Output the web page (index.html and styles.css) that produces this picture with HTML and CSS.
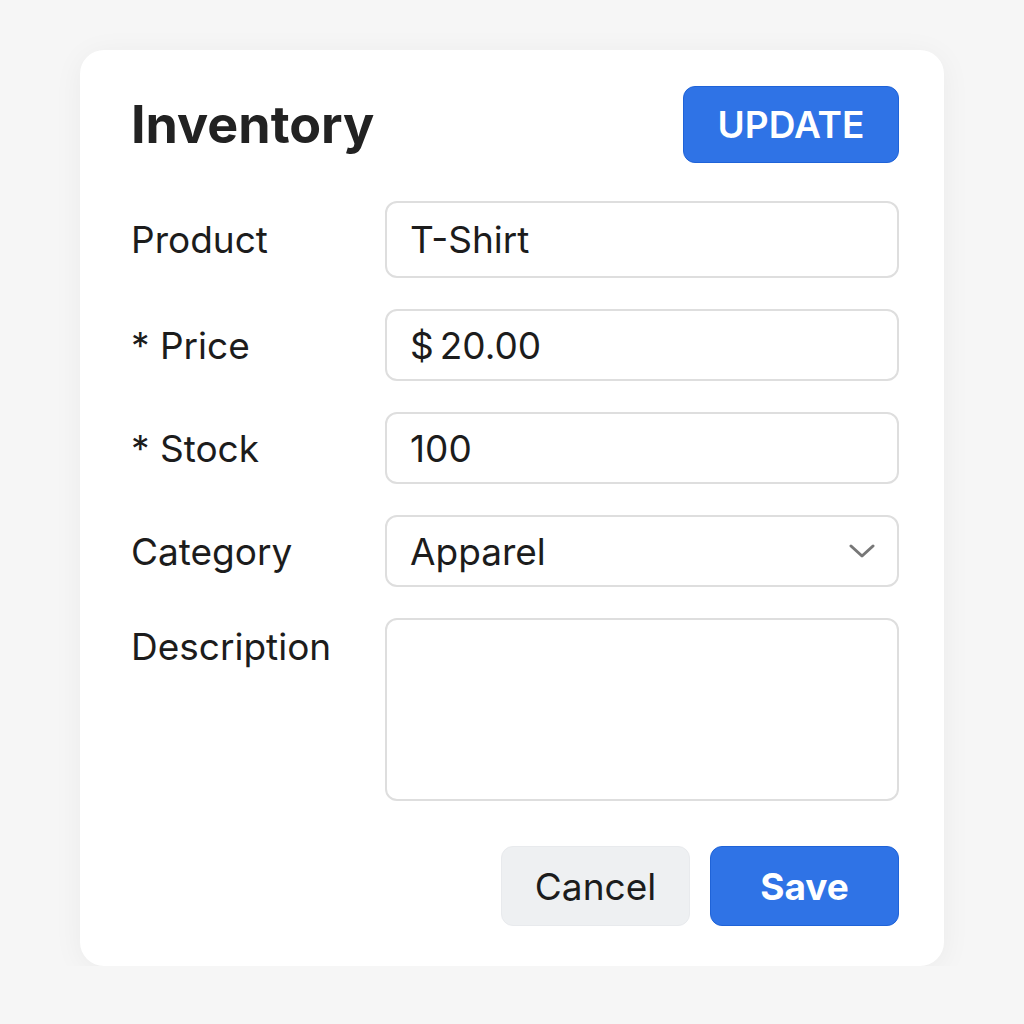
FILE: index.html
```html
<!DOCTYPE html>
<html lang="en">
<head>
    <meta charset="UTF-8">
    <meta name="viewport" content="width=device-width, initial-scale=1.0">
    <title>Inventory</title>
    <link rel="stylesheet" href="styles.css">
</head>
<body>
    <div class="card">
        <header>
            <h1>Inventory</h1>
            <button class="update-btn">UPDATE</button>
        </header>
        <form class="form">
            <label for="product">Product</label>
            <div class="field field-tall">
                <input id="product" type="text" value="T-Shirt">
            </div>

            <label for="price">* Price</label>
            <div class="field">
                <span class="prefix">$</span>
                <input id="price" type="text" value="20.00">
            </div>

            <label for="stock">* Stock</label>
            <div class="field">
                <input id="stock" type="text" value="100">
            </div>

            <label for="category">Category</label>
            <div class="field select-field">
                <select id="category">
                    <option>Apparel</option>
                    <option>Shoes</option>
                    <option>Accessories</option>
                </select>
                <svg class="chevron" width="26" height="14" viewBox="0 0 26 14">
                    <path d="M2 2 L13 12 L24 2" fill="none" stroke="#777" stroke-width="3" stroke-linecap="round" stroke-linejoin="round"/>
                </svg>
            </div>

            <label for="description" class="label-top">Description</label>
            <textarea id="description" class="textarea"></textarea>
        </form>
        <div class="actions">
            <button class="btn btn-cancel">Cancel</button>
            <button class="btn btn-save">Save</button>
        </div>
    </div>
</body>
</html>
```

FILE: styles.css
```css
body {
    font-family: Inter, "Noto Sans", sans-serif;
    margin: 0;
    padding: 50px 0 0 0;
    background-color: #f6f6f6;
    color: #1c1c1c;
}
.card {
    box-sizing: border-box;
    width: 864px;
    margin: 0 0 0 80px;
    background: #fff;
    border-radius: 24px;
    padding: 36px 45px 40px 51px;
    box-shadow: 0 4px 30px rgba(0, 0, 0, 0.05);
}
header {
    display: flex;
    justify-content: space-between;
    align-items: center;
    height: 77px;
    margin-bottom: 38px;
}
h1 {
    margin: 0;
    font-size: 52px;
    font-weight: 700;
    color: #222;
}
.update-btn {
    width: 216px;
    height: 77px;
    border: 1px solid #1f63d8;
    border-radius: 12px;
    background: #2f73e6;
    color: #fff;
    font-family: inherit;
    font-size: 37px;
    font-weight: 600;
    cursor: pointer;
}
/* Form grid */
.form {
    display: grid;
    grid-template-columns: 254px minmax(0, 1fr);
    row-gap: 31px;
    align-items: center;
}
.form label {
    font-size: 37px;
    color: #1c1c1c;
}
.form .label-top {
    align-self: start;
    padding-top: 6px;
}
.field {
    box-sizing: border-box;
    display: flex;
    align-items: center;
    height: 72px;
    border: 2px solid #dedede;
    border-radius: 12px;
    padding: 0 22px 0 23px;
    position: relative;
}
.field-tall {
    height: 77px;
}
.field input,
.field select {
    flex: 1;
    width: 100%;
    border: none;
    outline: none;
    background: transparent;
    font-family: inherit;
    font-size: 37px;
    color: #1c1c1c;
    padding: 0;
    min-width: 0;
}
.prefix {
    font-size: 37px;
    margin-right: 6px;
}
.select-field select {
    appearance: none;
    -webkit-appearance: none;
    cursor: pointer;
}
.chevron {
    position: absolute;
    right: 22px;
    top: 50%;
    transform: translateY(-50%);
    pointer-events: none;
}
.textarea {
    box-sizing: border-box;
    width: 100%;
    height: 183px;
    border: 2px solid #dedede;
    border-radius: 12px;
    resize: none;
    font-family: inherit;
    font-size: 30px;
    outline: none;
}
.actions {
    display: flex;
    justify-content: flex-end;
    gap: 20px;
    margin-top: 45px;
}
.btn {
    width: 189px;
    height: 80px;
    border-radius: 12px;
    font-family: inherit;
    font-size: 37px;
    cursor: pointer;
}
.btn-cancel {
    background: #eef0f2;
    border: 1px solid #e8eaed;
    color: #1c1c1c;
}
.btn-save {
    background: #2f73e6;
    border: 1px solid #1f63d8;
    color: #fff;
    font-weight: 700;
}
```
